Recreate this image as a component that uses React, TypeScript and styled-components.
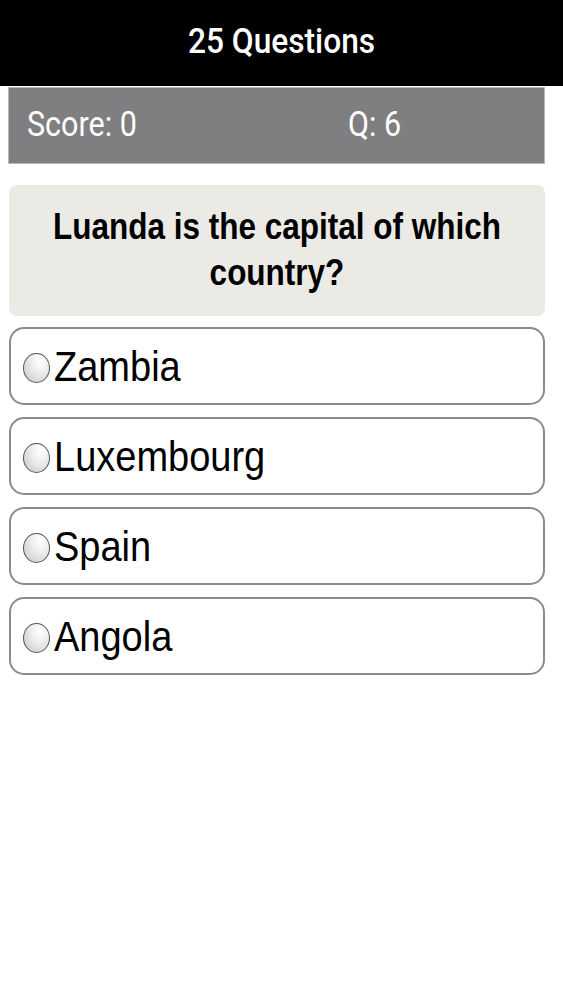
import styled, { createGlobalStyle } from "styled-components";

const GlobalStyle = createGlobalStyle`
  html, body {
    margin: 0;
    padding: 0;
    background: #ffffff;
    font-family: "Liberation Sans", Arial, sans-serif;
  }
`;

const QUIZ = {
  title: "25 Questions",
  score: 0,
  number: 6,
  question: ["Luanda is the capital of which", "country?"],
  answers: ["Zambia", "Luxembourg", "Spain", "Angola"],
};

const Page = styled.div`
  width: 563px;
  min-height: 1000px;
  display: flex;
  flex-direction: column;
  background: #ffffff;
`;

const Header = styled.header`
  height: 86px;
  background: #000000;
  display: flex;
  align-items: center;
  justify-content: center;
`;

const Stretched = styled.span<{ $size: number; $scale: number; $weight?: number }>`
  display: inline-block;
  font-size: ${(p) => p.$size}px;
  font-weight: ${(p) => p.$weight ?? 400};
  line-height: 1;
  transform: scaleY(${(p) => p.$scale});
  white-space: nowrap;
`;

const Title = styled(Stretched)`
  color: #ffffff;
  font-family: Roboto, "Liberation Sans", sans-serif;
  margin-top: -2px;
`;

const ScoreBar = styled.div`
  margin: 1px 18px 0 8px;
  height: 77px;
  box-sizing: border-box;
  background: #7f7e80;
  border: 1px solid #b9b9bb;
  display: grid;
  grid-template-columns: 321px 1fr;
  align-items: center;
`;

const ScoreCell = styled.div`
  padding-left: 18px;
  color: #ffffff;
  font-family: Roboto, "Liberation Sans", sans-serif;
`;

const Content = styled.main`
  margin: 21px 18px 0 9px;
  display: flex;
  flex-direction: column;
  gap: 11px;
`;

const QuestionBox = styled.div`
  height: 131px;
  box-sizing: border-box;
  background: #ebeae5;
  border-radius: 8px;
  display: flex;
  flex-direction: column;
  align-items: center;
  justify-content: center;
  gap: 14px;
  color: #000000;
  padding-bottom: 2px;
`;

const Answers = styled.div`
  display: flex;
  flex-direction: column;
  gap: 12px;
`;

const AnswerRow = styled.label`
  height: 78px;
  box-sizing: border-box;
  border: 2px solid #8b8b8d;
  border-radius: 15px;
  display: flex;
  align-items: center;
  padding-left: 12px;
  gap: 4px;
  background: #ffffff;
  color: #000000;
  cursor: pointer;
`;

const Radio = styled.span`
  width: 27px;
  height: 30px;
  flex: none;
  border-radius: 50%;
  box-sizing: border-box;
  border: 1.5px solid #555555;
  background: radial-gradient(ellipse at 65% 25%, #ffffff 0%, #f0f0f0 35%, #c4c4c4 100%);
  margin-top: 4px;
`;

const AnswerText = styled(Stretched)`
  margin-top: 2px;
`;

const App = () => {
  return (
    <Page>
      <GlobalStyle />
      <Header>
        <Title $size={31.7} $scale={1.1} $weight={500}>
          {QUIZ.title}
        </Title>
      </Header>
      <ScoreBar>
        <ScoreCell>
          <Stretched $size={30.5} $scale={1.12}>
            Score: {QUIZ.score}
          </Stretched>
        </ScoreCell>
        <ScoreCell>
          <Stretched $size={30.5} $scale={1.12}>
            Q: {QUIZ.number}
          </Stretched>
        </ScoreCell>
      </ScoreBar>
      <Content>
        <QuestionBox>
          {QUIZ.question.map((line) => (
            <Stretched key={line} $size={31.5} $scale={1.2} $weight={700}>
              {line}
            </Stretched>
          ))}
        </QuestionBox>
        <Answers>
          {QUIZ.answers.map((answer) => (
            <AnswerRow key={answer}>
              <Radio />
              <AnswerText $size={38} $scale={1.1}>
                {answer}
              </AnswerText>
            </AnswerRow>
          ))}
        </Answers>
      </Content>
    </Page>
  );
};

export default App;
